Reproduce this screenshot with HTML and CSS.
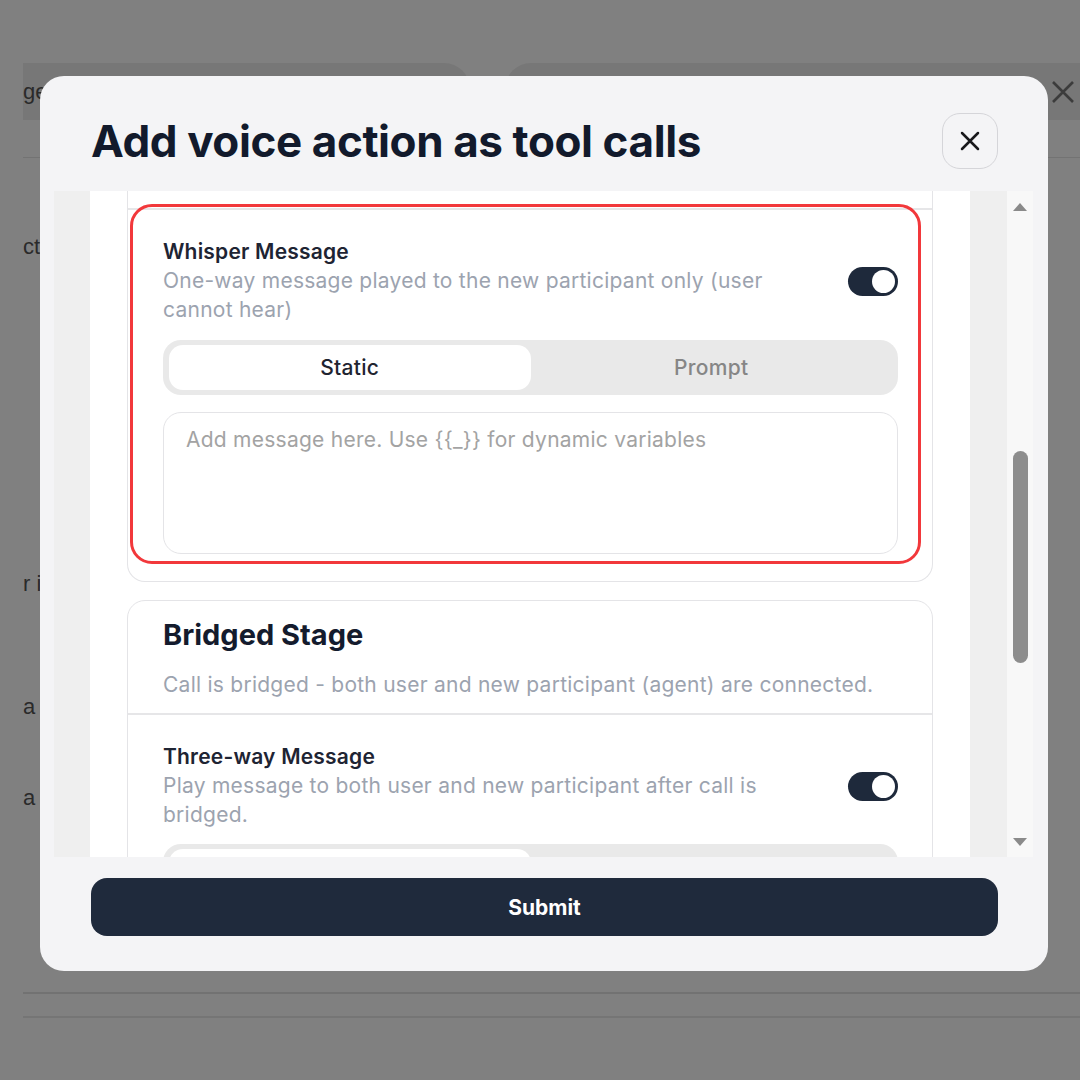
FILE: index.html
```html
<!DOCTYPE html>
<html lang="en">

<head>
    <meta charset="UTF-8">
    <meta name="viewport" content="width=device-width, initial-scale=1.0">
    <title>Add voice action</title>
    <link rel="stylesheet" href="styles.css">
</head>

<body>
    <div class="page">
        <div class="tabs">
            <div class="tab tab-left"><span class="frag">ge</span></div>
            <div class="tab tab-right">
                <svg class="bg-close" viewBox="0 0 24 24" width="24" height="24">
                    <path d="M2 2 L22 22 M22 2 L2 22" />
                </svg>
            </div>
        </div>
        <div class="rule"></div>
        <p class="frag frag-ct">ct</p>
        <p class="frag frag-ri">r i</p>
        <p class="frag frag-a1">a</p>
        <p class="frag frag-a2">a</p>
        <div class="rule rule-low"></div>
        <div class="rule rule-last"></div>
    </div>

    <div class="modal">
        <div class="modal-head">
            <h1 class="modal-title">Add voice action as tool calls</h1>
            <button class="close-btn" aria-label="Close">
                <svg viewBox="0 0 22 22" width="22" height="22">
                    <path d="M3 3 L19 19 M19 3 L3 19" />
                </svg>
            </button>
        </div>

        <div class="modal-body">
            <div class="pane">
                <div class="sheet">
                    <div class="card card-cut">
                        <div class="card-top"></div>
                        <div class="option">
                            <div class="highlight"></div>
                            <div class="opt-head">
                                <div class="opt-text">
                                    <p class="opt-title">Whisper Message</p>
                                    <p class="opt-desc">One-way message played to the new participant only (user cannot hear)</p>
                                </div>
                                <div class="toggle"><span class="knob"></span></div>
                            </div>
                            <div class="seg">
                                <div class="seg-item active">Static</div>
                                <div class="seg-item">Prompt</div>
                            </div>
                            <textarea class="msg" placeholder="Add message here. Use {{_}} for dynamic variables"></textarea>
                        </div>
                    </div>

                    <div class="card">
                        <div class="stage-head">
                            <h2 class="stage-title">Bridged Stage</h2>
                            <p class="opt-desc stage-desc">Call is bridged - both user and new participant (agent) are connected.</p>
                        </div>
                        <div class="option">
                            <div class="opt-head">
                                <div class="opt-text">
                                    <p class="opt-title">Three-way Message</p>
                                    <p class="opt-desc">Play message to both user and new participant after call is bridged.</p>
                                </div>
                                <div class="toggle"><span class="knob"></span></div>
                            </div>
                            <!-- the rest of this card is scrolled out of view -->
                            <div class="seg seg-peek">
                                <div class="seg-item active"></div>
                                <div class="seg-item"></div>
                            </div>
                        </div>
                    </div>
                </div>
            </div>
            <div class="scrollbar">
                <span class="arrow-up"></span>
                <span class="thumb"></span>
                <span class="arrow-down"></span>
            </div>
        </div>

        <div class="modal-foot">
            <button class="submit-btn">Submit</button>
        </div>
    </div>
</body>

</html>
```

FILE: styles.css
```css
* {
    margin: 0;
    padding: 0;
    box-sizing: border-box;
}

body {
    width: 1080px;
    height: 1080px;
    overflow: hidden;
    background-color: #808080;
    font-family: "Inter", "Noto Sans", sans-serif;
}

/* page behind the overlay */
.page {
    padding-left: 23px;
}

.tabs {
    display: flex;
    margin-top: 63px;
    height: 57px;
}

.tab {
    background-color: #777777;
    display: flex;
    align-items: center;
}

.tab-left {
    width: 447px;
    border-top-right-radius: 26px;
}

.tab-right {
    flex: 1;
    margin-left: 35px;
    border-top-left-radius: 26px;
    justify-content: flex-end;
    padding-right: 5px;
}

.bg-close {
    fill: none;
    stroke: #3c3c3c;
    stroke-width: 2.6;
}

.rule {
    height: 1px;
    margin-top: 37px;
    background-color: #737373;
}

.frag {
    font-family: "Liberation Sans", sans-serif;
    font-size: 22px;
    line-height: 26px;
    color: #2a2a2a;
}

.frag-ct {
    margin-top: 76px;
}

.frag-ri {
    margin-top: 311px;
}

.frag-a1 {
    margin-top: 97px;
}

.frag-a2 {
    margin-top: 65px;
}

.rule-low {
    height: 2px;
    margin-top: 181px;
    background-color: #727272;
}

.rule-last {
    height: 2px;
    margin-top: 22px;
    background-color: #757575;
}

/* modal overlay */
.modal {
    position: fixed;
    left: 40px;
    top: 76px;
    width: 1008px;
    height: 895px;
    border-radius: 24px;
    background-color: #f4f4f6;
    display: flex;
    flex-direction: column;
}

.modal-head {
    display: flex;
    align-items: center;
    justify-content: space-between;
    padding: 37px 50px 22px 51px;
}

.modal-title {
    font-size: 44px;
    font-weight: 700;
    letter-spacing: -0.4px;
    color: #121a2c;
}

.close-btn {
    width: 56px;
    height: 56px;
    border: 1px solid #d5d5d9;
    border-radius: 18px;
    background: transparent;
    display: flex;
    align-items: center;
    justify-content: center;
}

.close-btn svg {
    fill: none;
    stroke: #18181b;
    stroke-width: 2.5;
    stroke-linecap: round;
}

.modal-body {
    display: flex;
    height: 666px;
    margin: 0 15px 0 14px;
    overflow: hidden;
}

.pane {
    flex: 1;
    background-color: #efefef;
    padding: 0 37px 0 36px;
    overflow: hidden;
}

.sheet {
    height: 100%;
    background-color: #fff;
    padding: 0 37px;
    overflow: hidden;
}

.card {
    border: 1px solid #e4e4e7;
    border-radius: 18px;
    margin-top: 18px;
}

.card-cut {
    margin-top: 0;
    border-top: none;
    border-radius: 0 0 18px 18px;
}

.card-top {
    height: 17px;
}

.option {
    position: relative;
    border-top: 2px solid #e6e6e8;
    padding: 28px 34px 27px 35px;
}

.highlight {
    position: absolute;
    left: 2px;
    right: 11px;
    top: -6px;
    bottom: 17px;
    border: 3px solid #f2383b;
    border-radius: 22px;
    pointer-events: none;
}

.opt-head {
    display: flex;
    align-items: center;
    gap: 60px;
}

.opt-text {
    flex: 1;
}

.opt-title {
    font-size: 21px;
    font-weight: 600;
    line-height: 28px;
    letter-spacing: 0.2px;
    color: #1e2433;
}

.opt-desc {
    font-size: 21px;
    line-height: 29px;
    letter-spacing: 0.25px;
    color: #9ca3af;
}

.toggle {
    width: 50px;
    height: 29px;
    border-radius: 15px;
    background-color: #1e293b;
    display: flex;
    align-items: center;
    justify-content: flex-end;
    padding-right: 3px;
}

.knob {
    width: 23px;
    height: 23px;
    border-radius: 50%;
    background-color: #fff;
}

.seg {
    display: grid;
    grid-template-columns: 1fr 1fr;
    margin-top: 16px;
    height: 55px;
    padding: 5px 6px;
    border-radius: 18px;
    background-color: #e9e9e9;
}

.seg-peek {
    margin-top: 15px;
}

.seg-item {
    display: flex;
    align-items: center;
    justify-content: center;
    font-size: 21px;
    font-weight: 500;
    letter-spacing: 0.3px;
    color: #868686;
}

.seg-item.active {
    background-color: #fff;
    border-radius: 14px;
    color: #1f2430;
}

.msg {
    display: block;
    width: 100%;
    height: 142px;
    margin-top: 17px;
    padding: 13px 22px;
    border: 1px solid #e4e4e7;
    border-radius: 18px;
    resize: none;
    font-family: inherit;
    font-size: 21px;
    line-height: 28px;
    letter-spacing: 0.25px;
    background: #fff;
}

.msg::placeholder {
    color: #a3a3a3;
}

.stage-head {
    padding: 16px 34px 14px 35px;
}

.stage-title {
    font-size: 29px;
    font-weight: 700;
    line-height: 36px;
    color: #141b2d;
}

.stage-desc {
    margin-top: 17px;
}

/* fake scrollbar */
.scrollbar {
    width: 26px;
    background-color: #f8f8f8;
    display: flex;
    flex-direction: column;
    align-items: center;
    padding: 12px 0 11px;
}

.arrow-up {
    border-left: 7px solid transparent;
    border-right: 7px solid transparent;
    border-bottom: 8px solid #8a8a8a;
}

.thumb {
    width: 15px;
    height: 212px;
    margin-top: 240px;
    border-radius: 8px;
    background-color: #8d8d8d;
}

.arrow-down {
    margin-top: auto;
    border-left: 7px solid transparent;
    border-right: 7px solid transparent;
    border-top: 8px solid #8a8a8a;
}

.modal-foot {
    padding: 21px 50px 35px 51px;
}

.submit-btn {
    width: 100%;
    height: 58px;
    border: none;
    border-radius: 16px;
    background-color: #1f2a3c;
    color: #fff;
    font-family: inherit;
    font-size: 21px;
    font-weight: 700;
}
```
